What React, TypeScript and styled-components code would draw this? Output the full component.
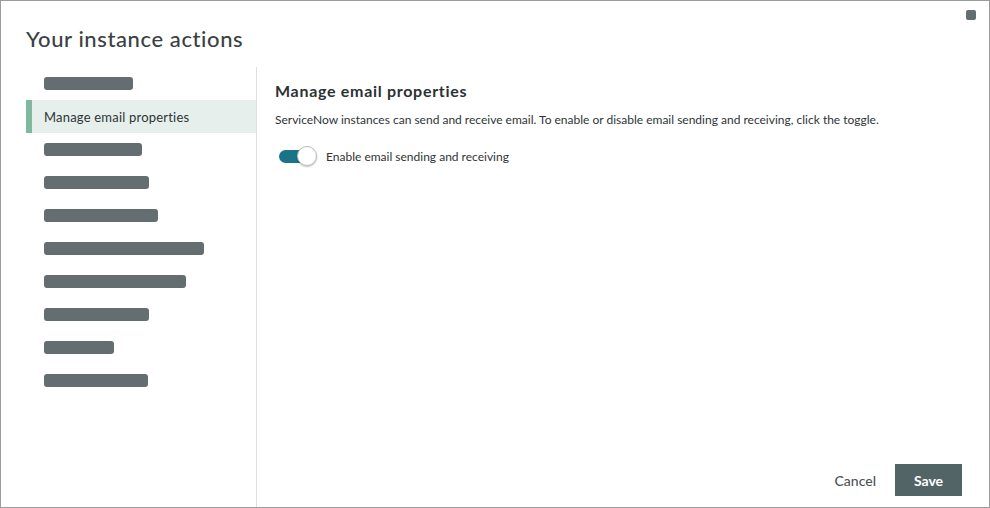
import styled, { createGlobalStyle } from "styled-components";

const GlobalStyle = createGlobalStyle`
  html, body {
    margin: 0;
    padding: 0;
    background: #ffffff;
  }
  * {
    box-sizing: border-box;
  }
`;

const placeholderWidths = [89, 98, 105, 114, 160, 142, 105, 70, 104];

export default function App() {
  return (
    <>
      <GlobalStyle />
      <Dialog>
        <CloseMark aria-label="Close" />
        <Header>
          <Title>Your instance actions</Title>
        </Header>
        <Body>
          <Sidebar>
            <NavItem>
              <Placeholder style={{ width: placeholderWidths[0] }} />
            </NavItem>
            <NavItem $active>Manage email properties</NavItem>
            {placeholderWidths.slice(1).map((w, i) => (
              <NavItem key={i}>
                <Placeholder style={{ width: w }} />
              </NavItem>
            ))}
          </Sidebar>
          <Panel>
            <Heading>Manage email properties</Heading>
            <Description>
              ServiceNow instances can send and receive email. To enable or
              disable email sending and receiving, click the toggle.
            </Description>
            <ToggleRow>
              <Toggle role="switch" aria-checked="true">
                <Knob />
              </Toggle>
              <ToggleLabel>Enable email sending and receiving</ToggleLabel>
            </ToggleRow>
            <Footer>
              <CancelButton>Cancel</CancelButton>
              <SaveButton>Save</SaveButton>
            </Footer>
          </Panel>
        </Body>
      </Dialog>
    </>
  );
}

const Dialog = styled.div`
  position: relative;
  width: 990px;
  height: 508px;
  border: 1px solid #9c9c9c;
  background: #ffffff;
  display: flex;
  flex-direction: column;
  font-family: Lato, "Liberation Sans", sans-serif;
  color: #2f3436;
`;

const CloseMark = styled.div`
  position: absolute;
  top: 9px;
  right: 13px;
  width: 10px;
  height: 10px;
  border-radius: 2px;
  background: #646e70;
`;

const Header = styled.div`
  height: 66px;
  padding: 25px 0 0 25px;
`;

const Title = styled.h1`
  margin: 0;
  font-family: Lato, "Liberation Sans", sans-serif;
  font-weight: 500;
  font-size: 22px;
  line-height: 26px;
  color: #3b4143;
  letter-spacing: 0.6px;
`;

const Body = styled.div`
  flex: 1;
  display: flex;
  min-height: 0;
`;

const Sidebar = styled.nav`
  width: 231px;
  margin-left: 25px;
  border-right: 1px solid #dedede;
  display: flex;
  flex-direction: column;
`;

const NavItem = styled.div<{ $active?: boolean }>`
  height: 33px;
  display: flex;
  align-items: center;
  padding-left: 12px;
  font-size: 13px;
  color: #2f3436;
  background: ${(p) => (p.$active ? "#e6efec" : "transparent")};
  border-left: 6px solid ${(p) => (p.$active ? "#7fb89f" : "transparent")};
  letter-spacing: 0.2px;
`;

const Placeholder = styled.div`
  height: 13px;
  border-radius: 3px;
  background: #646e70;
`;

const Panel = styled.section`
  flex: 1;
  display: flex;
  flex-direction: column;
  padding: 14px 27px 11px 18px;
`;

const Heading = styled.h2`
  margin: 0;
  font-family: Lato, "Liberation Sans", sans-serif;
  font-weight: 700;
  font-size: 16px;
  line-height: 20px;
  color: #2c3133;
  letter-spacing: 0.7px;
`;

const Description = styled.p`
  margin: 10px 0 0;
  font-size: 12px;
  line-height: 18px;
  color: #2f3436;
`;

const ToggleRow = styled.div`
  margin-top: 17px;
  display: flex;
  align-items: center;
  gap: 9px;
  padding-left: 4px;
`;

const Toggle = styled.div`
  position: relative;
  width: 38px;
  height: 20px;
  display: flex;
  align-items: center;
  &::before {
    content: "";
    width: 32px;
    height: 13px;
    border-radius: 7px;
    background: #1a7488;
  }
`;

const Knob = styled.span`
  position: absolute;
  right: 0;
  top: 0;
  width: 20px;
  height: 20px;
  border-radius: 50%;
  background: #ffffff;
  border: 1px solid #b9bfc0;
  box-shadow: 0 1px 2px rgba(0, 0, 0, 0.25);
`;

const ToggleLabel = styled.span`
  font-size: 12px;
  color: #2f3436;
`;

const Footer = styled.div`
  margin-top: auto;
  display: flex;
  justify-content: flex-end;
  align-items: center;
  gap: 19px;
`;

const CancelButton = styled.button`
  border: none;
  background: transparent;
  padding: 0;
  font-family: Lato, "Liberation Sans", sans-serif;
  font-size: 14px;
  font-weight: 500;
  color: #4b5659;
  cursor: pointer;
`;

const SaveButton = styled.button`
  width: 67px;
  height: 32px;
  border: none;
  background: #536467;
  color: #ffffff;
  font-family: Lato, "Liberation Sans", sans-serif;
  font-size: 14px;
  font-weight: 700;
  cursor: pointer;
`;
